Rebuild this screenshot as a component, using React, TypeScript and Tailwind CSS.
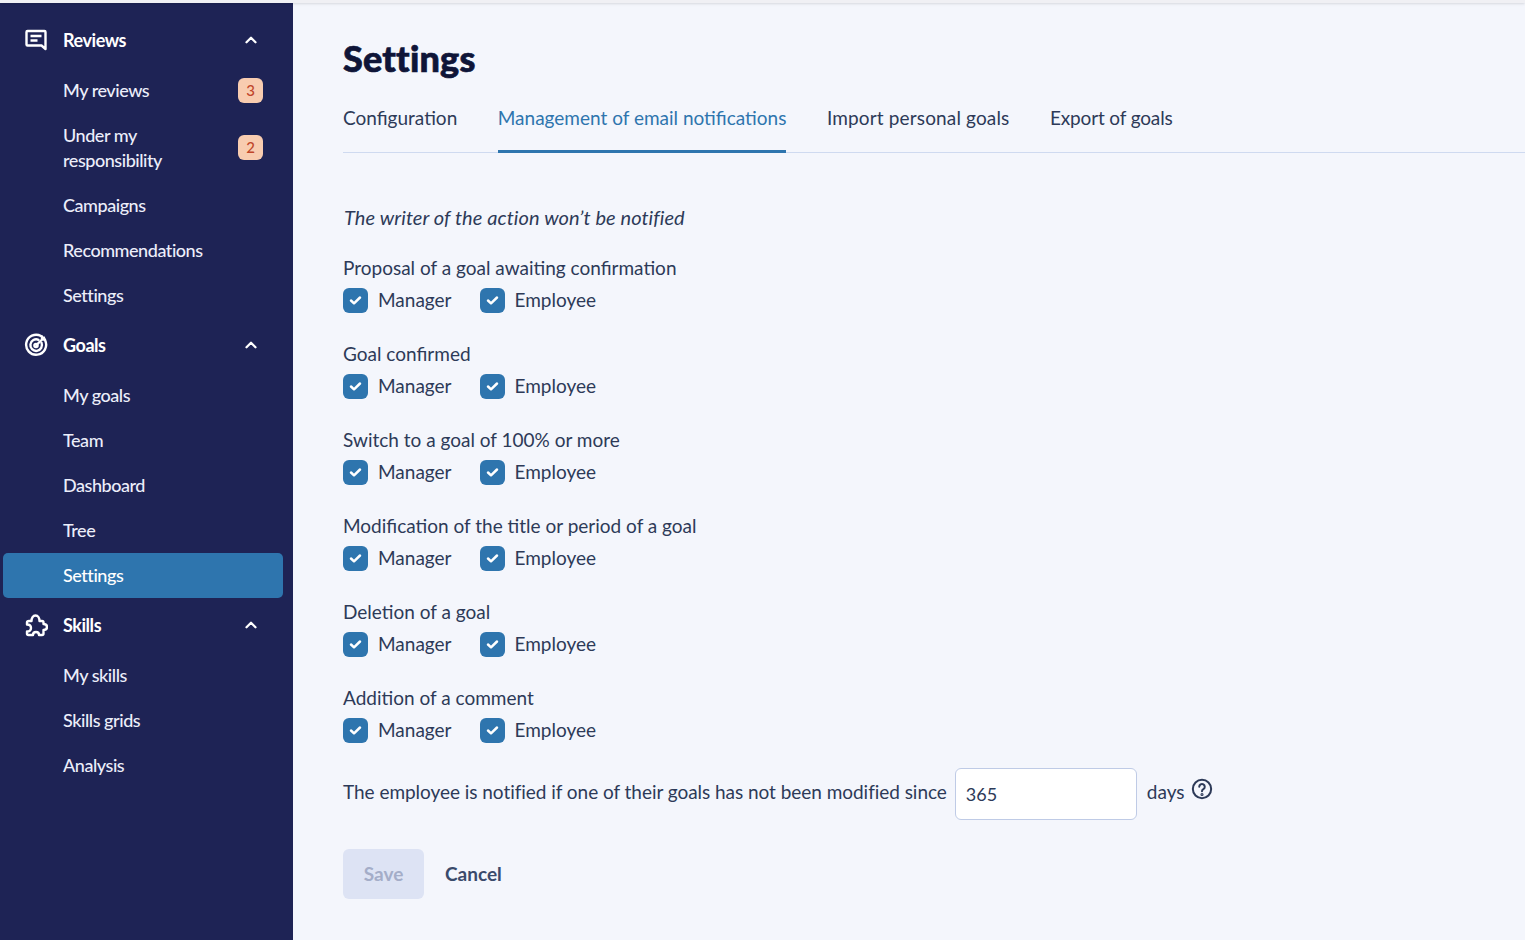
import { ChevronUp } from 'lucide-react';

const FONT = "font-['Lato','Noto_Sans',sans-serif]";

const NAV = [
  {
    label: 'Reviews',
    icon: 'reviews',
    items: [
      { label: 'My reviews', badge: 3 },
      { label: 'Under my responsibility', badge: 2 },
      { label: 'Campaigns' },
      { label: 'Recommendations' },
      { label: 'Settings' },
    ],
  },
  {
    label: 'Goals',
    icon: 'goals',
    items: [
      { label: 'My goals' },
      { label: 'Team' },
      { label: 'Dashboard' },
      { label: 'Tree' },
      { label: 'Settings', active: true },
    ],
  },
  {
    label: 'Skills',
    icon: 'skills',
    items: [{ label: 'My skills' }, { label: 'Skills grids' }, { label: 'Analysis' }],
  },
];

const GROUPS = [
  'Proposal of a goal awaiting confirmation',
  'Goal confirmed',
  'Switch to a goal of 100% or more',
  'Modification of the title or period of a goal',
  'Deletion of a goal',
  'Addition of a comment',
];

const TABS = ['Configuration', 'Management of email notifications', 'Import personal goals', 'Export of goals'];

function NavIcon({ name }: { name: string }) {
  if (name === 'reviews') {
    return (
      <svg width="24" height="24" viewBox="0 0 24 24" fill="none" stroke="white" strokeWidth="2.4" strokeLinejoin="round">
        <path d="M3.500 3h17a1 1 0 0 1 1 1v17l-4-3.500H3.500a1 1 0 0 1-1-1V4a1 1 0 0 1 1-1z" />
        <path d="M6.500 8h11M6.500 12.500h7" />
      </svg>
    );
  }
  if (name === 'goals') {
    return (
      <svg width="24" height="24" viewBox="0 0 24 24" fill="none" stroke="white" strokeWidth="2.4" strokeLinecap="round">
        <path d="M17 3a10 10 0 1 0 4.200 4.500" />
        <path d="M14.500 6.800a5.800 5.800 0 1 0 3 3" />
        <circle cx="12" cy="12.500" r="1.600" />
        <path d="M12.500 12L20 4.500M18 3.500v3h3" />
      </svg>
    );
  }
  return (
    <svg width="24" height="24" viewBox="0 0 24 24" fill="none" stroke="white" strokeWidth="2.400" strokeLinejoin="round">
      <path d="M3 9.500C3 8.500 4 8 5 8H7.500C7.500 5 9 2.500 11.500 2.500C14 2.500 15.500 5 15.500 8H18C19 8 19.500 8.500 19.500 9.500V11C22 11 23 12.500 23 14C23 16 21.500 17 19.500 17V20.500C19.500 21.500 19 22 18 22H15C15 20 14 19 12 19C10 19 9 20 9 22H4.500C3.500 22 3 21.500 3 20.500V18.500C5.500 18.500 7 17 7 15C7 13 5.500 11.500 3 11.500Z" />
    </svg>
  );
}

function Check({ label }: { label: string }) {
  return (
    <div className="flex items-center gap-2.5">
      <div className="flex h-[25px] w-[25px] items-center justify-center rounded-md bg-[#2e75ae]">
        <svg width="13" height="11" viewBox="0 0 13 11" fill="none" stroke="white" strokeWidth="2.500" strokeLinecap="round" strokeLinejoin="round">
          <path d="M2 5.500l3 2.800 6-5.800" />
        </svg>
      </div>
      <span>{label}</span>
    </div>
  );
}

export default function App() {
  return (
    <div className={`flex h-[940px] flex-col overflow-hidden bg-[#f4f6fc] text-[19px] text-[#2d3a58] ${FONT}`}>
      <div className="relative z-10 h-[3px] shrink-0 bg-[#f0f0f4] shadow-sm" />
      <div className="flex min-h-0 flex-1">
        <aside className="flex w-[293px] shrink-0 flex-col gap-[5px] bg-[#1e2355] pl-[3px] pr-[10px] pt-[14.5px] text-[18px] font-medium tracking-[-0.45px] text-[#eceefa]">
          {NAV.map((section) => (
            <div key={section.label} className="flex flex-col gap-[5px]">
              <div className="flex h-[45px] items-center pl-[21px] pr-[23px] font-bold text-white">
                <NavIcon name={section.icon} />
                <span className="ml-[15px] flex-1">{section.label}</span>
                <ChevronUp size={18} strokeWidth={3} />
              </div>
              <div className="flex flex-col">
                {section.items.map((item) => (
                  <div
                    key={item.label}
                    className={`flex items-center justify-between rounded-[5px] py-[10px] pl-[60px] pr-[20px] leading-[25px] ${item.active ? 'bg-[#2e75ae] text-white' : ''}`}
                  >
                    <span className={item.badge ? 'max-w-[125px]' : ''}>{item.label}</span>
                    {item.badge ? (
                      <span className="flex h-[25px] w-[25px] items-center justify-center rounded-md bg-[#f8ccb0] text-[15px] tracking-normal text-[#c0452a]">
                        {item.badge}
                      </span>
                    ) : null}
                  </div>
                ))}
              </div>
            </div>
          ))}
        </aside>

        <main className="min-w-0 flex-1 pl-[50px]">
          <h1 className="pt-[32px] text-[36px] font-black leading-[46px] tracking-[0.2px] text-[#0f1538] [-webkit-text-stroke:0.7px_#0f1538]">
            Settings
          </h1>
          <div className="mt-[14px] flex h-[58px] gap-[40.5px] border-b border-[#cfdaf0]">
            {TABS.map((tab, i) => (
              <div
                key={tab}
                className={`h-[58px] border-b-[3px] pt-[10px] leading-[26px] ${i === 1 ? 'border-[#2e75ae] text-[#2e75ae]' : 'border-transparent'} ${i === 2 ? 'tracking-[0.15px]' : ''} ${i === 3 ? 'tracking-[-0.15px]' : ''}`}
              >
                {tab}
              </div>
            ))}
          </div>

          <p className="mt-[51px] pl-px text-[20px] leading-[26px] tracking-[0.08px] italic">The writer of the action won’t be notified</p>

          <div className="mt-[25px] flex flex-col gap-[28px]">
            {GROUPS.map((group) => (
              <div key={group}>
                <div className="leading-[26px]">{group}</div>
                <div className="mt-[6px] flex h-[26px] items-center gap-[28px]">
                  <Check label="Manager" />
                  <Check label="Employee" />
                </div>
              </div>
            ))}
          </div>

          <div className="mt-[25px] flex items-center">
            <span className="pb-1 tracking-[-0.04px]">The employee is notified if one of their goals has not been modified since</span>
            <div className="ml-2 flex h-[52px] w-[182px] items-center rounded-md border border-[#bfcbe6] bg-white px-[10px] text-[18px]">
              365
            </div>
            <span className="ml-[10px] pb-1">days</span>
            <svg className="ml-[6px] -mt-[10px]" width="22" height="22" viewBox="0 0 24 24" fill="none" stroke="#2d3a58" strokeWidth="2.200" strokeLinecap="round">
              <circle cx="12" cy="12" r="10" />
              <path d="M9 9.500a3 3 0 1 1 4.500 2.600c-1 .6-1.500 1.200-1.500 2.400" />
              <circle cx="12" cy="18" r="0.600" />
            </svg>
          </div>

          <div className="mt-[29px] flex items-center gap-[21px] font-bold">
            <div className="flex h-[50px] w-[81px] items-center justify-center rounded-md bg-[#dde3f4] text-[#a4adc8]">Save</div>
            <div className="text-[#3a4a6b]">Cancel</div>
          </div>
        </main>
      </div>
    </div>
  );
}
